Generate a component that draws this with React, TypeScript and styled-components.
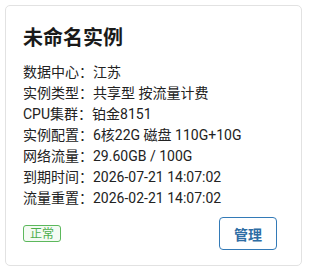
import styled, { createGlobalStyle } from 'styled-components'

const GlobalStyle = createGlobalStyle`
  html, body {
    margin: 0;
    padding: 0;
    background: #fff;
  }
  body {
    font-family: Roboto, "Noto Sans CJK SC", sans-serif;
    color: #222;
  }
`

interface InfoRow {
  label: string
  value: string
}

const rows: InfoRow[] = [
  { label: '数据中心', value: '江苏' },
  { label: '实例类型', value: '共享型 按流量计费' },
  { label: 'CPU集群', value: '铂金8151' },
  { label: '实例配置', value: '6核22G 磁盘 110G+10G' },
  { label: '网络流量', value: '29.60GB / 100G' },
  { label: '到期时间', value: '2026-07-21 14:07:02' },
  { label: '流量重置', value: '2026-02-21 14:07:02' }
]

const App = () => {
  return (
    <>
      <GlobalStyle />
      <Card>
        <Title>未命名实例</Title>
        <InfoList>
          {rows.map((row) => (
            <Row key={row.label}>
              {row.label}：{row.value}
            </Row>
          ))}
        </InfoList>
        <Footer>
          <StatusBadge>正常</StatusBadge>
          <ManageButton type="button">管理</ManageButton>
        </Footer>
      </Card>
    </>
  )
}

export default App

const Card = styled.div`
  box-sizing: border-box;
  margin: 5px;
  width: 297px;
  height: 261px;
  border: 1px solid #e2e2e2;
  border-radius: 5px;
  background: #fff;
  padding: 17px 24px 16px 17px;
  display: flex;
  flex-direction: column;
`

const Title = styled.h2`
  margin: 0 0 9px;
  font-size: 20px;
  line-height: 30px;
  font-weight: 700;
  color: #1a1a1a;
`

const InfoList = styled.div`
  display: flex;
  flex-direction: column;
`

const Row = styled.div`
  font-size: 14px;
  line-height: 21px;
  color: #222;
  white-space: nowrap;
`

const Footer = styled.div`
  margin-top: 8px;
  display: flex;
  align-items: center;
  justify-content: space-between;
`

const StatusBadge = styled.span`
  box-sizing: border-box;
  display: inline-flex;
  align-items: center;
  justify-content: center;
  height: 17px;
  padding: 0 6px;
  border: 1px solid #5cb85c;
  border-radius: 3px;
  background: #f4fbf4;
  color: #4cae4c;
  font-size: 12px;
  line-height: 1;
`

const ManageButton = styled.button`
  box-sizing: border-box;
  width: 58px;
  height: 33px;
  border: 1px solid #337ab7;
  border-radius: 4px;
  background: #fff;
  color: #2e6da4;
  font-family: Roboto, "Noto Sans CJK SC", sans-serif;
  font-size: 14px;
  font-weight: 700;
  cursor: pointer;
`
